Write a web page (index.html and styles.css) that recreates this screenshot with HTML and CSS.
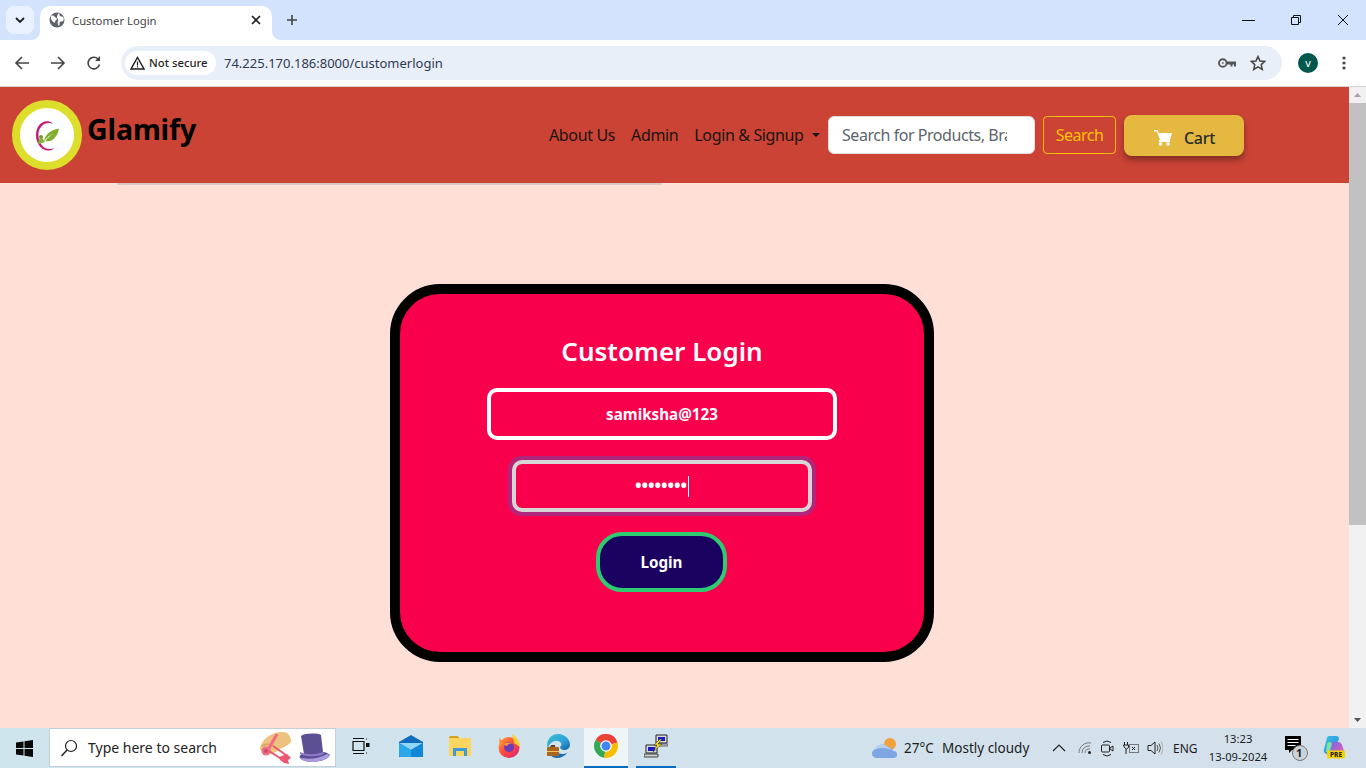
FILE: index.html
```html
<!DOCTYPE html>
<html lang="en">
<head>
<meta charset="utf-8">
<title>Customer Login</title>
<link rel="stylesheet" href="styles.css">
</head>
<body>
<div class="tabstrip">
  <div class="tab-menu"><svg width="10" height="6" viewBox="0 0 10 6"><path d="M1 1l4 4 4-4" fill="none" stroke="#1f1f1f" stroke-width="1.8"/></svg></div>
  <div class="tab">
    <svg class="favicon" width="16" height="16" viewBox="0 0 16 16"><circle cx="8" cy="8" r="7.5" fill="#5f6368"/><path d="M2 4c2-1 3 0 4 1s2 1 2 2-2 1-2 3-3-1-4-3zM10 1c1 1 0 2 1 3s2 0 3 1 1 3 0 4-2 0-3 1 0 3-1 4c-1-1-2-3-1-5s-1-2-1-4 1-3 2-4z" fill="#fff"/></svg>
    <span class="tab-title">Customer Login</span>
    <svg class="tab-close" width="10" height="10" viewBox="0 0 10 10"><path d="M1 1l8 8M9 1l-8 8" stroke="#1f1f1f" stroke-width="1.6"/></svg>
  </div>
  <svg class="new-tab" width="12" height="12" viewBox="0 0 12 12"><path d="M6 1v10M1 6h10" stroke="#444" stroke-width="1.6"/></svg>
  <div class="win-controls">
    <svg width="46" height="12" viewBox="0 0 46 12"><path d="M14 6.500h13" stroke="#111" stroke-width="1"/></svg>
    <svg width="46" height="12" viewBox="0 0 46 12"><path d="M17.500 3.500h7v7h-7zM19.500 3.500v-2h7v7h-2" fill="none" stroke="#111" stroke-width="1"/></svg>
    <svg width="46" height="12" viewBox="0 0 46 12"><path d="M18 1l10 10M28 1l-10 10" stroke="#111" stroke-width="1"/></svg>
  </div>
</div>
<div class="toolbar">
  <svg class="nav-icon" width="16" height="16" viewBox="0 0 16 16"><path d="M15 8H2M8 2L2 8l6 6" fill="none" stroke="#444" stroke-width="1.6"/></svg>
  <svg class="nav-icon" width="16" height="16" viewBox="0 0 16 16"><path d="M1 8h13M8 2l6 6-6 6" fill="none" stroke="#444" stroke-width="1.6"/></svg>
  <svg class="nav-icon" width="16" height="16" viewBox="0 0 16 16"><path d="M13.500 9.500A5.800 5.800 0 1 1 12 4" fill="none" stroke="#444" stroke-width="1.600"/><path d="M14 1v5H9z" fill="#444"/></svg>
  <div class="omnibox">
    <div class="chip">
      <svg width="15" height="14" viewBox="0 0 15 14"><path d="M7.500 1.500L14 13H1z" fill="none" stroke="#1f1f1f" stroke-width="1.400"/><path d="M7.500 5.500v4M7.500 10.300v1.300" stroke="#1f1f1f" stroke-width="1.200"/></svg>
      <span>Not secure</span>
    </div>
    <span class="url">74.225.170.186:8000/customerlogin</span>
    <svg class="omni-key" width="18" height="12" viewBox="0 0 18 12"><circle cx="4.800" cy="6" r="3.800" fill="none" stroke="#555" stroke-width="1.900"/><circle cx="4.800" cy="6" r="1" fill="#777"/><path d="M8.500 4.500H18v5h-2V7.500h-1.500v2h-2v-2h-4z" fill="#555"/></svg>
    <svg class="omni-star" width="16" height="16" viewBox="0 0 16 16"><path d="M8 1.500l2 4.500 4.800.4-3.600 3.200 1.100 4.800L8 11.900l-4.300 2.500 1.100-4.800L1.200 6.400 6 6z" fill="none" stroke="#444" stroke-width="1.500"/></svg>
  </div>
  <div class="avatar">v</div>
  <svg class="kebab" width="4" height="14" viewBox="0 0 4 14"><circle cx="2" cy="2" r="1.600" fill="#444"/><circle cx="2" cy="7" r="1.600" fill="#444"/><circle cx="2" cy="12" r="1.600" fill="#444"/></svg>
</div>
<div class="viewport">
  <main class="page">
    <header class="site-header">
      <div class="logo">
        <svg width="24" height="32" viewBox="0 0 24 32"><path d="M14 1.500C6 0 1 7 1 15.500S7 31 14 30.500c2-.2 4-1 5-2.500-3 1.500-8 1.500-11-1.500S3 18 3.500 13 8 3 14 3c2 0 3 .5 4 1.500-1-2-2.500-2.800-4-3z" fill="#c4187e"/><path d="M9 21c1-6 6-11 15-12.500C23 15 19 20 15 21c-2 .4-3.500.4-4.500-.3 2.500-3 5-5.500 8-7.500-3.500 1.500-6.500 4.500-9.500 7.800z" fill="#7fae2e"/><circle cx="6" cy="17" r="2" fill="#6b9c28"/><path d="M3 24c0-4 2-6 3.500-6s3 3 3.500 4c-2 1-4 1-7 2z" fill="#86b33a"/></svg>
      </div>
      <a class="brand">Glamify</a>
      <nav class="nav">
        <a class="nav-link">About Us</a>
        <a class="nav-link">Admin</a>
        <a class="nav-link nav-drop">Login &amp; Signup<i class="caret"></i></a>
      </nav>
      <input class="search-input" type="text" placeholder="Search for Products, Brands">
      <button class="search-btn" type="button">Search</button>
      <button class="cart-btn" type="button">
        <svg width="18" height="17" viewBox="0 0 18 17"><path d="M0 1h3.500l1 3H18l-2 7H6L3 2.500H0z" fill="#fff"/><path d="M5 11h11v2H5z" fill="#fff"/><circle cx="6.500" cy="15" r="1.800" fill="#fff"/><circle cx="14" cy="15" r="1.800" fill="#fff"/></svg>
        <span>Cart</span>
      </button>
    </header>
    <div class="header-rule"></div>
    <section class="card">
      <h1 class="card-title">Customer Login</h1>
      <input class="field" type="text" value="samiksha@123">
      <div class="field field-focus"><span class="dots">••••••••</span><i class="text-caret"></i></div>
      <button class="login-btn" type="button">Login</button>
    </section>
  </main>
  <aside class="scrollbar">
    <svg class="sb-arrow" width="17" height="16" viewBox="0 0 17 16"><path d="M5 10l3.500-4 3.500 4z" fill="#a3a3a3"/></svg>
    <div class="sb-thumb"></div>
    <svg class="sb-arrow sb-end" width="17" height="16" viewBox="0 0 17 16"><path d="M5 6l3.500 4 3.500-4z" fill="#505050"/></svg>
  </aside>
</div>
<footer class="taskbar">
  <div class="start"><svg width="17" height="17" viewBox="0 0 17 17"><path d="M0 2.500l7.500-1.100v6.500H0zM8.500 1.200L17 0v7.900H8.500zM0 9h7.500v6.600L0 14.500zM8.500 9H17v8l-8.500-1.200z" fill="#0a0a0a"/></svg></div>
  <div class="task-search">
    <svg width="16" height="18" viewBox="0 0 16 18"><circle cx="10" cy="7" r="5.500" fill="none" stroke="#222" stroke-width="1.200"/><path d="M6 11l-5.500 6" stroke="#222" stroke-width="1.500"/></svg>
    <span class="task-search-text">Type here to search</span>
    <svg class="hats" width="72" height="34" viewBox="0 0 72 34">
      <path d="M1 17C3 8 12 1 24 1c6 0 8 5 8 10-3 4-8 5-12 8-5 3-8 5-12 4-4-1-7-3-7-6z" fill="#eec27e"/>
      <path d="M3 15c3-3 9-2 13 1" fill="none" stroke="#d9a55e" stroke-width="1.500"/>
      <path d="M18 3L9 19" stroke="#ee6d85" stroke-width="3"/>
      <circle cx="7" cy="20" r="4.500" fill="#ec6f86"/><circle cx="7" cy="20" r="2" fill="#d84663"/>
      <path d="M10 20l14 9M14 15l13 9" stroke="#e8586f" stroke-width="2"/>
      <path d="M20 26l8-3 4 4-3 2 1 4-5-1-4-3z" fill="#e8586f"/>
      <path d="M42 5c4-3 16-3 20-1l2 17c2 0 5 1 7 3-2 4-8 6-16 7-5 0-12-1-14-4-1-2 0-3 2-4 1 0 2 0 2 0z" fill="#5c4f94"/>
      <path d="M41 21c7 3 16 3 23 0l1 2c-7 3-17 3-24 0z" fill="#8a7cc8"/>
      <path d="M39 26c8 3 21 2 29-3l3 1c-2 4-8 6-16 7-5 0-12-1-14-4z" fill="#a99be0"/>
    </svg>
  </div>
  <div class="apps">
    <div class="app app-view"><svg width="18" height="16" viewBox="0 0 18 16"><path d="M1 3.500h11v9H1zM1 .5h11M1 15.500h11" fill="none" stroke="#111" stroke-width="1.200"/><path d="M14 1h1M14 15h1" stroke="#111"/><rect x="14" y="5" width="3.500" height="4" fill="#111"/></svg></div>
    <div class="app"><svg width="24" height="22" viewBox="0 0 24 22"><path d="M0 7l12-7 12 7v15H0z" fill="#0f6cbd"/><path d="M0 8h24l-12 7z" fill="#8fd6f7"/><path d="M0 8l12 7v7H2q-2 0-2-2z" fill="#29a8ea"/><path d="M24 8l-12 7v7h10q2 0 2-2z" fill="#1488d8"/></svg></div>
    <div class="app"><svg width="22" height="20" viewBox="0 0 22 20"><path d="M0 1.500Q0 0 1.500 0h7l2 2h-10.500z" fill="#d89e1e"/><path d="M0 2h22v18H0z" fill="#fbd55e"/><path d="M4 12h14v8h-3v-5H7v5H4z" fill="#3c9ad6"/></svg></div>
    <div class="app"><svg width="24" height="24" viewBox="0 0 24 24"><defs><linearGradient id="ff" x1="0" y1="0" x2="1" y2="1"><stop offset="0" stop-color="#ffab2e"/><stop offset=".45" stop-color="#ff4f3a"/><stop offset="1" stop-color="#d81f7a"/></linearGradient></defs><circle cx="12" cy="13.500" r="10.500" fill="url(#ff)"/><path d="M2 3c1 3 3 4 5 5L3 12z" fill="#ff8a2e"/><path d="M15 0c5 3 8 8 8 13l-6-4z" fill="#ffcb30"/><circle cx="12" cy="13" r="5" fill="#6b3bb8"/><path d="M7 11c2-3 7-3 9-1-3-1-5 0-6 2z" fill="#ff9a2e"/></svg></div>
    <div class="app"><svg width="24" height="24" viewBox="0 0 24 24"><defs><linearGradient id="ed" x1="0" y1="0" x2="1" y2="1"><stop offset="0" stop-color="#35c1d0"/><stop offset=".6" stop-color="#2f9fd8"/><stop offset="1" stop-color="#0f5f9c"/></linearGradient></defs><path d="M12 0c7 0 12 5 12 11 0 3-3 5-6 5-2 0-4-1-4-3 1-1 2-2 1-4-2-3-7-3-10 0-2 2-3 4-3 6-3-8 3-15 10-15z" fill="url(#ed)"/><path d="M2 14c3-3 7-3 8 0s2 6 6 6c2 0 4 0 6-2-3 4-7 6-11 6-5 0-9-4-9-10z" fill="#1a6fb0"/><rect x="1" y="13" width="12" height="9" rx="1" fill="#a8671d"/><rect x="1" y="17" width="12" height="1" fill="#f6c35c"/><rect x="5" y="11" width="4" height="2" fill="#6e4210"/></svg></div>
    <div class="app app-active"><svg width="24" height="24" viewBox="0 0 24 24"><path d="M12 12L1.600 6A12 12 0 0 1 23.500 8.500z" fill="#ea4335"/><path d="M12 12L23.500 8.500A12 12 0 0 1 10 23.800z" fill="#fbbc04"/><path d="M12 12L10 23.800A12 12 0 0 1 1.600 6z" fill="#34a853"/><circle cx="12" cy="12" r="5.800" fill="#fff"/><circle cx="12" cy="12" r="4.500" fill="#4285f4"/></svg></div>
    <div class="app app-open"><svg width="24" height="24" viewBox="0 0 24 24"><path d="M12 1h11v8H12z" fill="#dcdcdc" stroke="#222"/><rect x="14" y="3" width="7" height="4" fill="#1a1ac8"/><path d="M14 10h10v2H14z" fill="#cfcfcf" stroke="#222" stroke-width=".6"/><path d="M2 11h11v8H2z" fill="#dcdcdc" stroke="#222"/><rect x="4" y="13" width="7" height="4" fill="#1a1ac8"/><path d="M0 20h14v3H0z" fill="#cfcfcf" stroke="#222" stroke-width=".8"/><path d="M16 5l-6 6 3 0-4 7 9-8-4 0 4-5z" fill="#f5e118" stroke="#222" stroke-width=".5"/></svg></div>
  </div>
  <div class="tray">
    <svg class="tr-cloud" width="26" height="22" viewBox="0 0 26 22"><circle cx="18" cy="7" r="6" fill="#f4a13c"/><path d="M5 21a4.500 4.500 0 0 1-1-9 7 7 0 0 1 12-2 5 5 0 0 1 5 4 3.500 3.500 0 0 1 1 7z" fill="#7fa6e3"/><path d="M4 12a7 7 0 0 1 12-2 5 5 0 0 1 4 3c-5-2-11-3-16-1z" fill="#b6cff2"/></svg>
    <span class="tr-text">27°C</span>
    <span class="tr-text">Mostly cloudy</span>
    <svg width="14" height="8" viewBox="0 0 14 8"><path d="M1 7l6-6 6 6" fill="none" stroke="#222" stroke-width="1.200"/></svg>
    <svg width="14" height="12" viewBox="0 0 14 12"><path d="M1 11A10 10 0 0 1 13 1M4 11a7 7 0 0 1 8-7M7 11a4 4 0 0 1 5-4" fill="none" stroke="#777" stroke-width="1"/><circle cx="11.500" cy="10.500" r="1.500" fill="#222"/></svg>
    <svg width="14" height="18" viewBox="0 0 14 18"><rect x="1.500" y="6" width="8" height="7" rx="1" fill="none" stroke="#222"/><path d="M10 9l3-2v5l-3-2zM3 3.500q4-3 8 0M3 15.500q4 3 8 0" fill="none" stroke="#222"/></svg>
    <svg width="16" height="14" viewBox="0 0 16 14"><rect x="6.500" y="3.500" width="9" height="8" fill="none" stroke="#777"/><path d="M1.500 1v3M4.500 1v3M.5 4h5v2.500l-2 1.500-2-1.500zM3 8v5M9 6l3 3M12 6l-3 3" fill="none" stroke="#222"/></svg>
    <svg width="16" height="16" viewBox="0 0 16 16"><path d="M1 5.500h3l4-3.500v12l-4-3.500H1z" fill="none" stroke="#222"/><path d="M10 5q2 3 0 6M12 3.500q3 4.500 0 9" fill="none" stroke="#555"/><path d="M14 1.500q4 6.500 0 13" fill="none" stroke="#aaa"/></svg>
    <span class="tr-text tr-small">ENG</span>
    <span class="tr-clock"><span>13:23</span><span>13-09-2024</span></span>
    <span class="tr-notif"><svg width="24" height="26" viewBox="0 0 24 26"><path d="M0 0h16v14H7l-3 3v-3H0z" fill="#000"/><path d="M2.500 3.500h11M2.500 6.500h11M2.500 9.500h8" stroke="#fff"/><circle cx="15" cy="17" r="7.500" fill="#c9d3da" stroke="#777"/></svg><b class="notif-num">1</b></span>
    <svg class="tr-copilot" width="22" height="26" viewBox="0 0 22 26"><defs><linearGradient id="cpa" x1="0" y1="0" x2="1" y2="1"><stop offset="0" stop-color="#2fc6e0"/><stop offset="1" stop-color="#3c7ce8"/></linearGradient><linearGradient id="cpb" x1="0" y1="0" x2="1" y2="1"><stop offset="0" stop-color="#7a6ae8"/><stop offset="1" stop-color="#ea5cb0"/></linearGradient></defs><path d="M6 1h7c2 0 3 1 3 3L9 19H5c-3 0-5-2-4-5L4 3c.4-1.300 1-2 2-2z" fill="url(#cpa)"/><path d="M9 7h6c2 0 3 1 4 3l2 6c.5 2-1 3-3 3H8z" fill="url(#cpb)"/><path d="M4 9c1-2 2-2 3-2l2 1-2 8-4 1z" fill="#7fe0a0"/><rect x="4" y="15.500" width="18" height="8" rx="1" fill="#f6d300"/><text class="pre-badge" x="13" y="22.300" text-anchor="middle">PRE</text></svg>
  </div>
</footer>
</body>
</html>
```
FILE: styles.css
```css
* { box-sizing: border-box; }
html, body { margin: 0; padding: 0; height: 100%; overflow: hidden; }
body {
  width: 1366px;
  height: 768px;
  display: flex;
  flex-direction: column;
  font-family: "Noto Sans", "Open Sans", sans-serif;
  color: #1f1f1f;
}

/* browser chrome */
.tabstrip {
  flex: 0 0 40px;
  background: #d3e3fd;
  display: flex;
  align-items: flex-start;
  padding: 6px 0 0 6px;
}
.tab-menu {
  width: 28px;
  height: 28px;
  border-radius: 8px;
  background: #e9f1fe;
  display: flex;
  align-items: center;
  justify-content: center;
}
.tab {
  position: relative;
  margin-left: 6px;
  width: 232px;
  height: 34px;
  background: #fff;
  border-radius: 10px 10px 0 0;
  display: flex;
  align-items: center;
  padding: 0 11px 6px 9px;
}
.tab::before, .tab::after {
  content: "";
  position: absolute;
  bottom: 0;
  width: 8px;
  height: 8px;
}
.tab::before { left: -8px; background: radial-gradient(circle at 0 0, #d3e3fd 7.5px, #fff 8px); }
.tab::after { right: -8px; background: radial-gradient(circle at 100% 0, #d3e3fd 7.5px, #fff 8px); }
.tab-title { margin-left: 7px; font-size: 11.300px; color: #444; flex: 1; }
.new-tab { margin: 8px 0 0 14px; }
.win-controls {
  margin-left: auto;
  display: flex;
  padding-top: 8px;
  gap: 0;
}
.win-controls svg { display: block; }
.toolbar {
  flex: 0 0 47px;
  background: #fff;
  border-bottom: 1px solid #d4d4d4;
  border-top-right-radius: 6px;
  display: flex;
  align-items: center;
  padding: 0 0 1px 14px;
}
.nav-icon { margin-right: 20px; }
.nav-icon:nth-child(3) { margin-right: 19px; }
.omnibox {
  width: 1161px;
  height: 34px;
  border-radius: 17px;
  background: #e9eff9;
  display: flex;
  align-items: center;
  padding-left: 4px;
}
.chip {
  width: 91px;
  height: 24px;
  border-radius: 12px;
  background: #fff;
  display: flex;
  align-items: center;
  gap: 4px;
  padding-left: 5px;
  font-size: 11.300px;
  font-weight: 500;
  color: #1f1f1f;
  white-space: nowrap;
}
.url { margin-left: 8px; font-size: 13px; color: #2d3b4e; flex: 1; }
.omni-key { margin-right: 14px; margin-left: -1px; }
.omni-star { margin-right: 16px; }
.avatar {
  margin-left: 16px;
  width: 20px;
  height: 20px;
  border-radius: 50%;
  background: #00574b;
  color: #fff;
  font-size: 11px;
  display: flex;
  align-items: center;
  justify-content: center;
}
.kebab { margin-left: 24px; }

/* page */
.viewport {
  flex: 0 0 641px;
  display: flex;
  overflow: hidden;
}
.page {
  flex: 1;
  background: #ffdfd6;
  min-width: 0;
}
.site-header {
  height: 96px;
  background: #ca4335;
  display: flex;
  align-items: center;
  padding-left: 12px;
}
.logo {
  width: 70px;
  height: 70px;
  border: 8px solid #dddd2b;
  border-radius: 50%;
  background: #fff;
  display: flex;
  align-items: center;
  justify-content: center;
  flex: none;
  padding-top: 1px;
}
.brand {
  margin: -12px 0 0 5px;
  font-size: 28.500px;
  font-weight: 700;
  color: #000;
  width: 111px;
  white-space: nowrap;
  letter-spacing: -.1px;
}
.nav {
  margin-left: 351px;
  width: 279px;
  display: flex;
  align-items: center;
  gap: 16px;
  font-size: 16px;
  letter-spacing: -.36px;
  color: #1c1412;
  white-space: nowrap;
}
.nav-drop { display: flex; align-items: center; }
.caret {
  margin-left: 8px;
  border: 4px solid transparent;
  border-top-color: #111;
  border-bottom-width: 0;
}
.search-input {
  width: 207px;
  height: 38px;
  border: 1px solid #ddd;
  border-radius: 6px;
  background: #fff;
  padding: 0 27px 0 13px;
  font: 16px "Noto Sans", sans-serif;
  letter-spacing: -.45px;
  color: #495057;
}
.search-input::placeholder { color: #5c646c; opacity: 1; }
.search-btn {
  margin-left: 8px;
  width: 73px;
  height: 38px;
  border: 1px solid #ffc107;
  border-radius: 4px;
  background: transparent;
  color: #ffc107;
  font: 16px "Noto Sans", sans-serif;
  letter-spacing: -.5px;
  padding: 0;
}
.cart-btn {
  margin-left: 8px;
  width: 120px;
  height: 41px;
  border: 0;
  border-radius: 8px;
  background: #e5b840;
  box-shadow: 0 4px 6px rgba(0,0,0,.35);
  display: flex;
  align-items: center;
  padding: 5px 0 0 30px;
  gap: 12px;
  color: #2c2c2c;
  font: 500 16px "Noto Sans", sans-serif;
  letter-spacing: -.3px;
}
.header-rule {
  margin-left: 117px;
  width: 545px;
  height: 2px;
  background: #d8c9c5;
}
.card {
  margin: 99px 0 0 390px;
  width: 544px;
  height: 378px;
  border: 10px solid #000;
  border-radius: 50px;
  background: #f9004d;
  display: flex;
  flex-direction: column;
  align-items: center;
  padding-top: 37px;
  color: #fff;
}
.card-title {
  margin: 0 0 17px;
  height: 40px;
  line-height: 40px;
  font-size: 26px;
  font-weight: 600;
  color: #fff;
}
.field {
  width: 350px;
  height: 52px;
  flex: none;
  border: 4px solid #fff;
  border-radius: 10px;
  background: transparent;
  outline: none;
  text-align: center;
  color: #fff;
  font: 700 15.200px "Noto Sans", sans-serif;
}
.field-focus {
  margin-top: 20px;
  width: 300px;
  border-color: #d6d6d6;
  box-shadow: 0 0 0 4px #b0267c;
  display: flex;
  align-items: center;
  justify-content: center;
  font-size: 17.500px;
}
.dots { letter-spacing: -.1px; line-height: 1; }
.text-caret {
  display: block;
  width: 1px;
  height: 21px;
  margin-left: 1px;
  background: #fff;
}
.login-btn {
  margin: 20px 1px 0 0;
  width: 131px;
  height: 60px;
  border: 4px solid #2ecc71;
  border-radius: 26px;
  background: #1b0260;
  color: #fff;
  font: 700 15.200px "Noto Sans", sans-serif;
  padding: 0;
}

/* scrollbar */
.scrollbar {
  flex: 0 0 17px;
  background: #f1f1f1;
  display: flex;
  flex-direction: column;
}
.sb-thumb {
  height: 422px;
  background: #c1c1c1;
}
.sb-end { margin-top: auto; }
.sb-arrow { display: block; flex: none; }

/* taskbar */
.taskbar {
  flex: 0 0 40px;
  background: linear-gradient(90deg, #cfe5ee, #d4e0eb);
  display: flex;
  align-items: stretch;
  font-size: 13px;
  color: #1c1c1c;
}
.start {
  width: 49px;
  display: flex;
  align-items: center;
  justify-content: center;
}
.task-search {
  width: 287px;
  margin-bottom: 1px;
  background: #fff;
  border: 1px solid #c5d0d6;
  display: flex;
  align-items: center;
  padding: 0 4px 0 11px;
}
.task-search-text { margin-left: 11px; font-size: 14px; color: #222; flex: 1; }
.hats { margin-top: 1px; }
.apps { display: flex; }
.app {
  width: 49px;
  display: flex;
  align-items: center;
  justify-content: center;
  padding-bottom: 2px;
  border-bottom: 2px solid transparent;
}
.app-view { margin-right: 1px; }
.app-active {
  width: 44px;
  margin: 0 3px 0 2px;
  background: #eef5f8;
  border-bottom-color: #0a6cc0;
}
.app-open {
  width: 40px;
  margin-left: 5px;
  border-bottom-color: #0a6cc0;
}
.tray {
  margin-left: auto;
  width: 494px;
  display: grid;
  grid-template-columns: 32px 38px 110px 26px 22px 23px 24px 26px 36px 58px 18px 38px 38px 5px;
  align-items: center;
  justify-items: start;
}
.tr-text { font-size: 13.500px; white-space: nowrap; }
.tr-small { font-size: 12px; }
.tr-clock {
  font-size: 11.200px;
  line-height: 18px;
  display: flex;
  flex-direction: column;
  align-items: center;
  width: 58px;
  white-space: nowrap;
}
.tr-notif { grid-column: 12; position: relative; display: block; height: 26px; margin-top: 2px; }
.notif-num {
  position: absolute;
  left: 11px;
  top: 9px;
  font-size: 11px;
  color: #222;
}
.pre-badge { font-family: "Noto Sans", sans-serif; font-size: 6.500px; font-weight: 800; fill: #222; }
```
